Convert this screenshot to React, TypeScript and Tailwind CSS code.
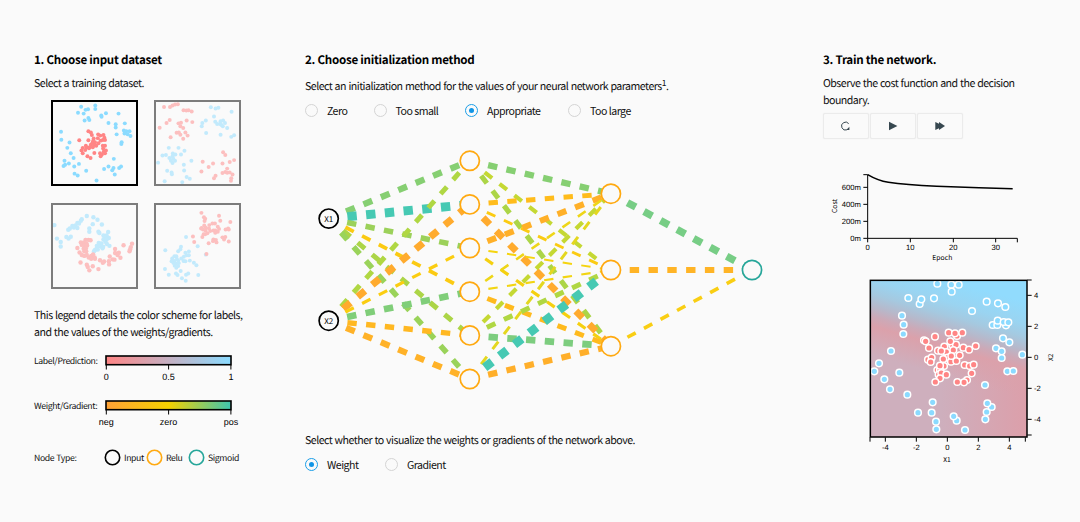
import { useState } from "react";

type Point = [number, number];

interface Dataset {
  id: string;
  viewBox: string;
  radius: number;
  red: Point[];
  blue: Point[];
}

const RED = "#ff8585";
const BLUE = "#8bdbff";

const datasets: Dataset[] = [
  {
    id: "circle",
    viewBox: "93 179 261 261",
    radius: 6.3,
    red: [[175,301],[204,272],[212,276],[215,284],[204,301],[235,282],[242,286],[252,284],[221,295],[219,303],[234,294],[255,293],[250,300],[257,300],[243,302],[217,309],[225,307],[236,310],[196,318],[212,315],[222,316],[229,318],[186,325],[198,324],[208,323],[218,323],[250,318],[257,318],[182,333],[194,332],[206,326],[251,327],[260,333],[186,342],[223,341],[241,342],[253,337],[257,342],[247,346],[243,352],[201,352],[211,357]],
    blue: [[181,194],[195,204],[203,202],[226,190],[226,201],[189,216],[171,213],[204,230],[192,238],[207,236],[245,222],[246,226],[260,215],[300,216],[268,246],[291,250],[291,260],[320,247],[317,270],[325,272],[335,272],[319,279],[329,282],[338,287],[294,282],[310,307],[309,313],[117,274],[118,299],[144,308],[137,325],[148,342],[157,357],[128,366],[142,375],[130,379],[125,383],[159,384],[174,376],[160,407],[170,413],[197,398],[230,429],[285,360],[268,384],[254,392],[284,389],[280,396],[302,389],[308,384],[288,410]],
  },
  {
    id: "xor",
    viewBox: "402 179 261 261",
    radius: 6.3,
    red: [[426,195],[445,195],[453,190],[461,187],[470,186],[488,205],[497,206],[504,205],[514,209],[444,236],[434,246],[412,261],[472,247],[480,245],[498,238],[516,243],[478,256],[487,262],[466,277],[473,276],[478,283],[494,276],[501,286],[447,291],[487,296],[614,339],[621,348],[649,364],[635,370],[549,369],[582,375],[612,375],[568,386],[545,400],[627,391],[621,402],[612,405],[627,404],[635,403],[644,410],[590,414],[585,422],[640,422],[639,430]],
    blue: [[575,196],[590,200],[599,197],[641,210],[585,225],[559,238],[548,246],[546,256],[589,242],[595,249],[606,240],[614,238],[604,249],[620,246],[613,256],[609,252],[627,262],[560,278],[606,283],[649,285],[640,290],[441,325],[472,325],[491,334],[421,349],[432,348],[454,343],[453,352],[462,346],[480,346],[443,357],[455,359],[448,366],[461,366],[453,373],[513,366],[407,372],[489,379],[436,398],[450,403],[451,409],[490,397],[428,431],[498,418],[508,423],[484,434]],
  },
  {
    id: "moons",
    viewBox: "34 23 261 261",
    radius: 7,
    red: [[121,142],[136,134],[145,134],[152,135],[131,142],[139,145],[124,150],[133,152],[141,152],[110,160],[130,162],[137,161],[117,174],[132,170],[138,170],[124,182],[132,185],[140,182],[146,190],[154,185],[160,180],[165,190],[154,194],[166,194],[120,206],[140,213],[143,220],[159,218],[148,231],[177,227],[182,199],[195,203],[210,202],[211,212],[191,207],[213,187],[222,196],[228,197],[230,176],[242,175],[238,182],[230,163],[247,191],[257,151],[284,146],[280,157],[278,164],[276,170]],
    blue: [[37,87],[140,58],[161,62],[124,68],[121,73],[110,80],[115,82],[174,70],[159,84],[188,85],[94,90],[104,88],[99,95],[110,96],[86,98],[81,102],[148,98],[148,108],[177,108],[180,112],[208,109],[75,125],[82,130],[89,124],[45,130],[57,141],[57,155],[193,120],[203,120],[197,128],[210,128],[193,133],[203,133],[178,144],[186,145],[199,140],[204,147],[212,153],[172,153],[182,154],[192,156],[190,161],[172,160],[166,166],[175,165],[163,170]],
  },
  {
    id: "blobs",
    viewBox: "342 23 261 261",
    radius: 6.3,
    red: [[485,48],[493,62],[497,67],[495,74],[541,57],[545,73],[577,77],[510,87],[486,96],[494,88],[520,82],[528,82],[499,95],[490,101],[484,98],[498,104],[509,98],[513,106],[537,92],[541,99],[523,104],[529,104],[537,108],[529,111],[562,101],[570,98],[572,101],[492,116],[497,116],[488,125],[504,113],[458,123],[462,141],[523,133],[522,138],[531,134],[533,142],[552,126],[561,125],[557,133],[508,145],[572,139],[501,179]],
    blue: [[436,125],[473,154],[499,181],[420,156],[418,164],[370,167],[411,170],[434,175],[445,171],[438,183],[445,183],[429,188],[399,186],[405,186],[392,193],[407,195],[390,202],[399,201],[411,200],[421,193],[428,201],[434,202],[448,200],[396,208],[404,210],[413,208],[400,216],[411,217],[405,223],[461,207],[469,215],[369,227],[419,233],[381,245],[404,241],[409,246],[436,245],[443,241],[475,246],[423,256],[435,264]],
  },
];

const nodes: Record<string, Point> = {
  x1: [328.7, 218.6],
  x2: [328.7, 320.7],
  a1: [469.8, 160.8],
  a2: [469.8, 204.4],
  a3: [469.8, 248],
  a4: [469.8, 291.7],
  a5: [469.8, 335.4],
  a6: [469.8, 379],
  b1: [610.9, 193.7],
  b2: [610.9, 270],
  b3: [610.9, 346.2],
  out: [752, 270],
};

// from, to, stroke width, colour
const links: [string, string, number, string][] = [
  ["x1", "a1", 6.3, "#86cf72"],
  ["x1", "a2", 9, "#46c9b3"],
  ["x1", "a3", 5.5, "#9cd15a"],
  ["x1", "a4", 3.8, "#fbca12"],
  ["x1", "a5", 5, "#acd547"],
  ["x1", "a6", 5.6, "#9ad35a"],
  ["x2", "a1", 5, "#b0d743"],
  ["x2", "a2", 7.2, "#ffab2e"],
  ["x2", "a3", 3.2, "#fbcd10"],
  ["x2", "a4", 6.6, "#80ce79"],
  ["x2", "a5", 5.5, "#ffb822"],
  ["x2", "a6", 6.2, "#ffb228"],
  ["a1", "b1", 6.3, "#86cf72"],
  ["a1", "b2", 4.2, "#c5d833"],
  ["a1", "b3", 5.2, "#acd547"],
  ["a2", "b1", 5, "#ffbc1c"],
  ["a2", "b2", 2.9, "#fbcb12"],
  ["a2", "b3", 7, "#ffab2e"],
  ["a3", "b1", 6, "#ffb028"],
  ["a3", "b2", 2, "#f5d40f"],
  ["a3", "b3", 3.2, "#f5d010"],
  ["a4", "b1", 2.6, "#eed618"],
  ["a4", "b2", 2.1, "#f2d512"],
  ["a4", "b3", 5, "#ffba1e"],
  ["a5", "b1", 4.2, "#c5d833"],
  ["a5", "b2", 5, "#b0d743"],
  ["a5", "b3", 6.8, "#7dcd7f"],
  ["a6", "b1", 3, "#e4d71f"],
  ["a6", "b2", 8.8, "#46c9b3"],
  ["a6", "b3", 6.2, "#ffaf2a"],
  ["b1", "out", 7.4, "#77cd85"],
  ["b2", "out", 6, "#ffb426"],
  ["b3", "out", 3.6, "#f9ce13"],
];

const boundaryBlue: Point[] = [[232,41],[274,44],[296,44],[275,65],[145,84],[179,102],[184,88],[222,85],[126,137],[131,164],[130,192],[336,123],[380,95],[414,100],[436,111],[398,165],[412,165],[413,152],[438,166],[431,156],[445,157],[429,205],[448,217],[408,235],[425,244],[425,264],[487,254],[93,243],[57,280],[43,304],[73,328],[118,308],[90,358],[142,374],[218,397],[174,428],[215,428],[228,455],[229,478],[315,480],[290,452],[281,439],[376,448],[380,426],[395,411],[382,400],[375,345],[442,304],[460,303]];
const boundaryRed: Point[] = [[192,211],[197,214],[225,200],[207,234],[266,188],[291,198],[285,190],[307,188],[277,224],[288,224],[271,214],[253,230],[234,242],[259,246],[244,243],[280,240],[310,233],[327,239],[347,228],[204,269],[215,263],[212,276],[263,263],[250,267],[273,275],[274,258],[289,273],[299,256],[314,285],[329,288],[341,284],[232,300],[252,288],[240,300],[240,287],[236,314],[244,309],[259,314],[240,325],[226,336],[335,310],[321,330],[312,337],[292,336]];

function DatasetThumb({ data, selected, onSelect }: { data: Dataset; selected: boolean; onSelect: () => void }) {
  return (
    <button onClick={onSelect} className={`block border-2 border-black ${selected ? "" : "opacity-50"}`}>
      <svg viewBox={data.viewBox} className="block h-[82px] w-[83px]">
        {data.blue.map(([x, y], i) => (
          <circle key={`b${i}`} cx={x} cy={y} r={data.radius} fill={BLUE} />
        ))}
        {data.red.map(([x, y], i) => (
          <circle key={`r${i}`} cx={x} cy={y} r={data.radius} fill={RED} />
        ))}
      </svg>
    </button>
  );
}

function Scale({ id, stops, labels }: { id: string; stops: string[]; labels: string[] }) {
  return (
    <svg width="150" height="34" className="block tracking-normal">
      <defs>
        <linearGradient id={id}>
          {stops.map((c, i) => (
            <stop key={c} offset={i / (stops.length - 1)} stopColor={c} />
          ))}
        </linearGradient>
      </defs>
      <rect x="12" y="2" width="125" height="8.7" fill={`url(#${id})`} stroke="#000" strokeWidth="1.6" />
      {labels.map((label, i) => (
        <g key={label}>
          <line x1={12.3 + i * 62.3} x2={12.3 + i * 62.3} y1="11" y2="15.5" stroke="#000" />
          <text x={12.3 + i * 62.3} y="25.5" textAnchor="middle" className="font-['Liberation_Sans',sans-serif] text-[9px]">
            {label}
          </text>
        </g>
      ))}
    </svg>
  );
}

function Radio({ label, checked, onChange, className }: { label: string; checked: boolean; onChange: () => void; className: string }) {
  return (
    <button onClick={onChange} className={`flex items-center gap-[9px] text-left ${className}`}>
      <span
        className={`flex h-[13px] w-[13px] shrink-0 items-center justify-center rounded-full border ${
          checked ? "border-[#1a9ee8]" : "border-[#d4d4d4]"
        }`}
      >
        {checked && <span className="h-[5px] w-[5px] rounded-full bg-[#1095e6]" />}
      </span>
      <span className="whitespace-nowrap">{label}</span>
    </button>
  );
}

function NodeKey({ label, color, className }: { label: string; color: string; className: string }) {
  return (
    <div className={`flex items-center gap-[3px] ${className}`}>
      <svg width="17" height="17">
        <circle cx="8.5" cy="8.5" r="7.2" fill="none" stroke={color} strokeWidth="1.6" />
      </svg>
      <span>{label}</span>
    </div>
  );
}

function nodeColor(id: string) {
  if (id.startsWith("x")) return "#000";
  return id === "out" ? "#26a69a" : "#ffa910";
}

function Network() {
  return (
    <svg viewBox="305 140 480 260" className="block h-[260px] w-[480px] tracking-normal">
      {links.map(([from, to, width, color]) => (
        <line
          key={from + to}
          x1={nodes[from][0]}
          y1={nodes[from][1]}
          x2={nodes[to][0]}
          y2={nodes[to][1]}
          stroke={color}
          strokeWidth={width}
          strokeDasharray="9.4 9.4"
        />
      ))}
      {Object.entries(nodes).map(([id, [x, y]]) => (
        <circle key={id} cx={x} cy={y} r="9.6" fill="#fafafa" stroke={nodeColor(id)} strokeWidth="1.7" />
      ))}
      <text x="328.7" y="221.6" textAnchor="middle" className="text-[8px]">X1</text>
      <text x="328.7" y="323.7" textAnchor="middle" className="text-[8px]">X2</text>
    </svg>
  );
}

function CostChart() {
  return (
    <svg viewBox="9 0 651 330" className="block h-[110px] w-[217px] font-['Liberation_Sans',sans-serif] text-[23px] tracking-normal">
      <path d="M130 44H143V235H592V247" fill="none" stroke="#000" strokeWidth="3" />
      {[82, 133, 184, 235].map((y, i) => (
        <g key={y}>
          <line x1="130" x2="143" y1={y} y2={y} stroke="#000" strokeWidth="3" />
          <text x="123" y={y + 8} textAnchor="end">{`${(3 - i) * 200}m`}</text>
        </g>
      ))}
      {[143, 271, 400, 527].map((x, i) => (
        <g key={x}>
          <line x1={x} x2={x} y1="235" y2="247" stroke="#000" strokeWidth="3" />
          <text x={x} y="270" textAnchor="middle">{i * 10}</text>
        </g>
      ))}
      <path
        d="M143 44C160 54 180 63 205 67C240 72 290 76 350 79C430 82 500 84 578 86"
        fill="none"
        stroke="#000"
        strokeWidth="4.6"
      />
      <g className="font-['Noto_Sans_CJK_SC',sans-serif] text-[20.5px]">
        <text x="367" y="300" textAnchor="middle">Epoch</text>
        <text transform="translate(50 138) rotate(-90)" textAnchor="middle">Cost</text>
      </g>
    </svg>
  );
}

function BoundaryChart() {
  return (
    <svg viewBox="27 0 573 600" className="block h-[200px] w-[191px] font-['Liberation_Sans',sans-serif] text-[23px] tracking-normal">
      <defs>
        <linearGradient id="right-fade">
          <stop offset="0.45" stopColor="#dc9faa" stopOpacity="0" />
          <stop offset="1" stopColor="#dc9faa" />
        </linearGradient>
        <linearGradient id="boundary" gradientUnits="userSpaceOnUse" x1="265" y1="30" x2="187.7" y2="299">
          <stop offset="0" stopColor="#91dbfd" />
          <stop offset="0.23" stopColor="#9ad4f1" />
          <stop offset="0.37" stopColor="#a5c9e0" />
          <stop offset="0.5" stopColor="#b7b8ca" />
          <stop offset="0.6" stopColor="#cca9b7" />
          <stop offset="0.7" stopColor="#dba1ab" />
          <stop offset="1" stopColor="#dba1ab" stopOpacity="0" />
        </linearGradient>
      </defs>
      <rect x="31" y="31" width="470" height="470" fill="#ceafbd" />
      <rect x="31" y="31" width="470" height="470" fill="url(#right-fade)" />
      <rect x="31" y="31" width="470" height="470" fill="url(#boundary)" />
      {boundaryBlue.map(([x, y], i) => (
        <circle key={`b${i}`} cx={x} cy={y} r="10" fill="#8bdaff" stroke="#fff" strokeWidth="4.5" />
      ))}
      {boundaryRed.map(([x, y], i) => (
        <circle key={`r${i}`} cx={x} cy={y} r="10" fill={RED} stroke="#fff" strokeWidth="4.5" />
      ))}
      <rect x="31" y="31" width="470" height="470" fill="none" stroke="#000" strokeWidth="4.5" />
      <path d="M502 30H515M502 495H515M30 502V515M496 502V515" stroke="#000" strokeWidth="3" />
      {[-4, -2, 0, 2, 4].map((v) => (
        <g key={v}>
          <line x1="502" x2="515" y1={262 - v * 46.5} y2={262 - v * 46.5} stroke="#000" strokeWidth="3" />
          <text x="522" y={270 - v * 46.5}>{v}</text>
          <line x1={262 + v * 46.5} x2={262 + v * 46.5} y1="502" y2="515" stroke="#000" strokeWidth="3" />
          <text x={262 + v * 46.5} y="539" textAnchor="middle">{v}</text>
        </g>
      ))}
      <g className="font-['Noto_Sans_CJK_SC',sans-serif] text-[20px]">
        <text x="261" y="576" textAnchor="middle">X1</text>
        <text transform="translate(578 262) rotate(-90)" textAnchor="middle">X2</text>
      </g>
    </svg>
  );
}

function Controls() {
  const button = "flex h-[26px] w-[46px] items-center justify-center rounded-[2px] border border-[#ebebeb] bg-[#fafafa] shadow-[0_0_1px_#e5e5e5]";
  return (
    <div className="mt-1 flex gap-px">
      <button className={button}>
        <svg width="12" height="12" viewBox="0 0 12 12">
          <path d="M6.8 9.9A4 4 0 1 1 8.7 3.6" fill="none" stroke="#36474f" strokeWidth="1" />
          <path d="M9.4 6.8V10H6.2Z" fill="#36474f" />
        </svg>
      </button>
      <button className={button}>
        <svg width="10" height="10" viewBox="0 0 10 10">
          <path d="M1 0.8L9.4 5L1 9.2Z" fill="#36474f" />
        </svg>
      </button>
      <button className={button}>
        <svg width="10" height="10" viewBox="0 0 10 10">
          <path d="M0.3 1L4 2.8V1L10 5L4 9V7.2L0.3 9Z" fill="#36474f" />
        </svg>
      </button>
    </div>
  );
}

const initMethods = [
  { label: "Zero", width: "w-[68.5px]" },
  { label: "Too small", width: "w-[91.5px]" },
  { label: "Appropriate", width: "w-[103px]" },
  { label: "Too large", width: "w-[80px]" },
];

const heading = "text-[11.6px] font-bold tracking-[-0.26px] [word-spacing:0] text-black";
const legendText = "text-[8.7px] tracking-[-0.38px]";

export default function App() {
  const [dataset, setDataset] = useState("circle");
  const [method, setMethod] = useState("Appropriate");
  const [view, setView] = useState("Weight");

  return (
    <div className="flex h-[522px] w-[1080px] overflow-hidden bg-[#fafafa] pt-[52px] font-['Noto_Sans_CJK_SC',sans-serif] text-[10.6px] leading-[17px] tracking-[-0.52px] text-[#111] [text-rendering:geometricPrecision] [word-spacing:0.55px]">
      <section className="ml-[34px] w-[271px] shrink-0">
        <h2 className={heading}>1. Choose input dataset</h2>
        <p className="mt-[6px]">Select a training dataset.</p>
        <div className="mt-2 ml-[17px] grid w-[190px] grid-cols-[87px_87px] gap-x-4 gap-y-[17px]">
          {datasets.map((d) => (
            <DatasetThumb key={d.id} data={d} selected={d.id === dataset} onSelect={() => setDataset(d.id)} />
          ))}
        </div>
        <p className="mt-[18px] whitespace-nowrap">
          This legend details the color scheme for labels,
          <br />
          and the values of the weights/gradients.
        </p>
        <div className={`mt-[13px] flex ${legendText}`}>
          <span className="w-[60px] whitespace-nowrap leading-[14px]">Label/Prediction:</span>
          <Scale id="label-scale" stops={["#ff8585", "#c5b0c2", "#8bdbff"]} labels={["0", "0.5", "1"]} />
        </div>
        <div className={`mt-[11px] flex ${legendText}`}>
          <span className="w-[60px] whitespace-nowrap leading-[14px]">Weight/Gradient:</span>
          <Scale id="weight-scale" stops={["#ffa137", "#f5d200", "#3dc4b0"]} labels={["neg", "zero", "pos"]} />
        </div>
        <div className={`mt-4 flex items-center ${legendText}`}>
          <span className="w-[70px]">Node Type:</span>
          <NodeKey label="Input" color="#000" className="w-[42px]" />
          <NodeKey label="Relu" color="#ffa910" className="w-[42px]" />
          <NodeKey label="Sigmoid" color="#26a69a" className="w-[60px]" />
        </div>
      </section>

      <section className="w-[518px] shrink-0">
        <h2 className={heading}>2. Choose initialization method</h2>
        <p className="mt-[9px] h-[17px] whitespace-nowrap">
          Select an initialization method for the values of your neural network parameters
          <sup className="top-[-4px] text-[8.5px] leading-none">1</sup>.
        </p>
        <div className="mt-[7px] flex">
          {initMethods.map((m) => (
            <Radio key={m.label} label={m.label} checked={m.label === method} onChange={() => setMethod(m.label)} className={m.width} />
          ))}
        </div>
        <div className="mt-[21px]">
          <Network />
        </div>
        <p className="mt-8">Select whether to visualize the weights or gradients of the network above.</p>
        <div className="mt-[7px] flex">
          <Radio label="Weight" checked={view === "Weight"} onChange={() => setView("Weight")} className="w-[80px]" />
          <Radio label="Gradient" checked={view === "Gradient"} onChange={() => setView("Gradient")} className="w-[80px]" />
        </div>
      </section>

      <section className="w-[250px] shrink-0">
        <h2 className={heading}>3. Train the network.</h2>
        <p className="mt-[6px]">
          Observe the cost function and the decision
          <br />
          boundary.
        </p>
        <Controls />
        <div className="mt-[21px]">
          <CostChart />
        </div>
        <div className="ml-[46px]">
          <BoundaryChart />
        </div>
      </section>
    </div>
  );
}
